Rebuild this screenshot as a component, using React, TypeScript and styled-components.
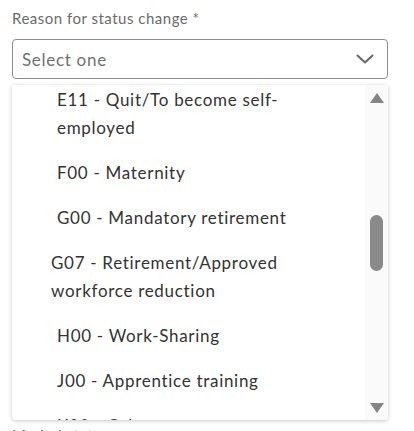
import React from 'react'
import styled, { createGlobalStyle } from 'styled-components'

const GlobalStyle = createGlobalStyle`
  body {
    margin: 0;
    background: #fff;
    font-family: Lato, "Open Sans", sans-serif;
  }
`

const Page = styled.div`
  padding: 8px 26px 0 12px;
`
const Field = styled.div`
  position: relative;
`
const Label = styled.div`
  font-size: 15px;
  line-height: 20px;
  letter-spacing: 0.5px;
  color: #6b6b6b;
  margin-bottom: 11px;
`
const NextLabel = styled(Label)`
  margin-top: 346px;
`
const Select = styled.div`
  box-sizing: border-box;
  height: 40px;
  display: flex;
  align-items: center;
  justify-content: space-between;
  padding: 0 13px 0 9px;
  border: 1px solid #8c8c8c;
  border-radius: 4px;
  font-size: 17px;
  letter-spacing: 0.7px;
  color: #707070;
`
const Chevron = styled.svg`
  width: 18px;
  height: 10px;
`
const Menu = styled.div`
  position: absolute;
  top: calc(100% + 6px);
  left: 0;
  right: 0;
  height: 335px;
  display: flex;
  background: #fff;
  border-radius: 0 0 4px 4px;
  box-shadow: 0 1px 4px rgba(0, 0, 0, 0.22);
  overflow: hidden;
`
const Options = styled.div`
  flex: 1;
  overflow: hidden;
`
const OptionList = styled.div`
  margin-top: -7px;
  padding-right: 30px;
`
const Option = styled.div<{ indent: number }>`
  padding: 8px 0 9px ${p => p.indent}px;
  font-size: 17px;
  line-height: 28px;
  letter-spacing: 0.7px;
  color: #333;
`
const Track = styled.div`
  width: 23px;
  display: flex;
  flex-direction: column;
  align-items: center;
  background: #fafafa;
  padding: 8px 0 7px;
`
const Arrow = styled.div<{ down?: boolean }>`
  width: 0;
  height: 0;
  border-left: 7.5px solid transparent;
  border-right: 7.5px solid transparent;
  ${p => p.down
    ? 'border-top: 10px solid #858585; margin-top: auto;'
    : 'border-bottom: 10px solid #858585;'}
`
const Thumb = styled.div`
  width: 13px;
  height: 56px;
  margin-top: 112px;
  border-radius: 7px;
  background: #8a8a8a;
`

const options = [
  { code: 'E11 - Quit/To become self-employed', indent: 45 },
  { code: 'F00 - Maternity', indent: 45 },
  { code: 'G00 - Mandatory retirement', indent: 45 },
  { code: 'G07 - Retirement/Approved workforce reduction', indent: 39 },
  { code: 'H00 - Work-Sharing', indent: 45 },
  { code: 'J00 - Apprentice training', indent: 45 },
  { code: 'K00 - Other', indent: 45 },
]

const App = () => (
  <>
    <GlobalStyle />
    <Page>
      <Label>Reason for status change *</Label>
      <Field>
        <Select>
          <span>Select one</span>
          <Chevron viewBox="0 0 18 10">
            <path d="M1.5 1.5 L9 8.5 L16.5 1.5" fill="none" stroke="#666" strokeWidth="2" strokeLinecap="round" strokeLinejoin="round" />
          </Chevron>
        </Select>
        <Menu>
          <Options>
            <OptionList>
              {options.map(({ code, indent }) => (
                <Option key={code} indent={indent}>{code}</Option>
              ))}
            </OptionList>
          </Options>
          <Track>
            <Arrow />
            <Thumb />
            <Arrow down />
          </Track>
        </Menu>
      </Field>
      <NextLabel>Marital status</NextLabel>
    </Page>
  </>
)

export default App
